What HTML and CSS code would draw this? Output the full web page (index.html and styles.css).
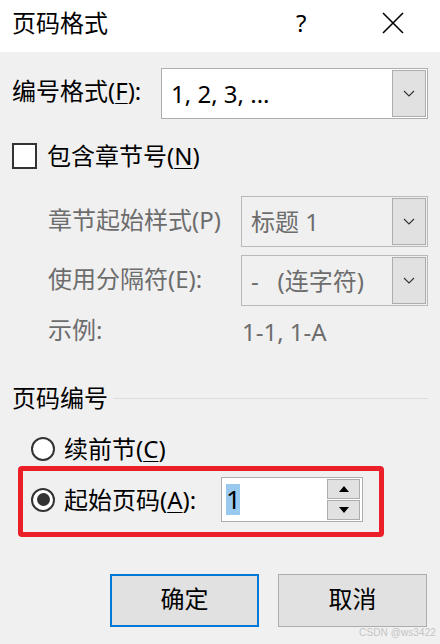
FILE: index.html
```html
<!DOCTYPE html>
<html lang="zh-CN">
<head>
<meta charset="utf-8">
<title>页码格式</title>
<link rel="stylesheet" href="styles.css">
</head>
<body>
<div class="dialog">
  <header class="titlebar">
    <span class="title">页码格式</span>
    <span class="help">?</span>
    <span class="close">
      <svg width="22" height="22" viewBox="0 0 22 22"><path d="M1 1 L21 21 M21 1 L1 21" stroke="#000" stroke-width="1.6" fill="none"/></svg>
    </span>
  </header>

  <main class="body">
    <div class="row row-format">
      <span class="label label-main">编号格式(<u>F</u>):</span>
      <div class="combo combo-wide">
        <span class="combo-text">1, 2, 3, ...</span>
        <span class="combo-btn"><svg width="12" height="7" viewBox="0 0 12 7"><path d="M1 1 L6 6 L11 1" stroke="#333" stroke-width="1.1" fill="none"/></svg></span>
      </div>
    </div>

    <div class="row row-check">
      <span class="checkbox"></span>
      <span class="label">包含章节号(<u>N</u>)</span>
    </div>

    <div class="row row-sub row-sub-first">
      <span class="label label-sub disabled">章节起始样式(P)</span>
      <div class="combo combo-narrow combo-disabled">
        <span class="combo-text">标题 1</span>
        <span class="combo-btn"><svg width="12" height="7" viewBox="0 0 12 7"><path d="M1 1 L6 6 L11 1" stroke="#333" stroke-width="1.1" fill="none"/></svg></span>
      </div>
    </div>

    <div class="row row-sub">
      <span class="label label-sub disabled">使用分隔符(E):</span>
      <div class="combo combo-narrow combo-disabled">
        <span class="combo-text">-&nbsp;&nbsp;&nbsp;(连字符)</span>
        <span class="combo-btn"><svg width="12" height="7" viewBox="0 0 12 7"><path d="M1 1 L6 6 L11 1" stroke="#333" stroke-width="1.1" fill="none"/></svg></span>
      </div>
    </div>

    <div class="row row-example">
      <span class="label label-sub disabled">示例:</span>
      <span class="label disabled example-value">1-1, 1-A</span>
    </div>

    <div class="row section-head">
      <span class="label">页码编号</span>
      <span class="section-line"></span>
    </div>

    <div class="row row-radio">
      <span class="radio"></span>
      <span class="label">续前节(<u>C</u>)</span>
    </div>

    <div class="row row-radio row-start">
      <span class="radio radio-on"></span>
      <span class="label label-start">起始页码(<u>A</u>):</span>
      <div class="spin">
        <span class="spin-text"><span class="sel">1</span></span>
        <span class="spin-btns">
          <span class="spin-btn"><svg width="10" height="6" viewBox="0 0 10 6"><path d="M0 6 L5 0 L10 6 Z" fill="#000"/></svg></span>
          <span class="spin-btn"><svg width="10" height="6" viewBox="0 0 10 6"><path d="M0 0 L10 0 L5 6 Z" fill="#000"/></svg></span>
        </span>
      </div>
      <span class="highlight"></span>
    </div>

    <div class="row row-buttons">
      <button class="btn btn-default">确定</button>
      <button class="btn">取消</button>
    </div>
  </main>
  <span class="watermark">CSDN @ws3422</span>
</div>
</body>
</html>
```

FILE: styles.css
```css
* { box-sizing: border-box; }

html, body {
  margin: 0;
  padding: 0;
}

body {
  width: 440px;
  height: 644px;
  overflow: hidden;
  background: #f0f0f0;
  font-family: "Noto Sans", "Noto Sans CJK SC", sans-serif;
  font-size: 24px;
  color: #000;
}

.dialog {
  position: relative;
  width: 440px;
  height: 644px;
  background: #f0f0f0;
}

u { text-decoration: underline; text-underline-offset: 3px; text-decoration-thickness: 1px; }

.titlebar {
  height: 52px;
  background: #fff;
  display: flex;
  align-items: center;
  padding-left: 12px;
}

.title {
  line-height: 30px;
  margin-top: -6px;
  width: 284px;
}

.help {
  width: 86px;
  line-height: 30px;
  margin-top: -6px;
}

.close {
  display: flex;
  margin-top: -6px;
}

.body {
  display: flex;
  flex-direction: column;
}

.row {
  display: flex;
  align-items: center;
}

.label {
  line-height: 30px;
  white-space: nowrap;
}

.disabled { color: #6d6d6d; }

.row-format {
  margin-top: 16px;
  height: 51px;
  padding-left: 12px;
}

.label-main { width: 149px; margin-top: -6px; }

.combo {
  height: 51px;
  border: 1px solid #adadad;
  background: #fff;
  display: flex;
  align-items: center;
  padding: 0 1px 0 9px;
}

.combo-wide { width: 267px; }
.combo-narrow { width: 187px; }

.combo-disabled {
  background: #f0f0f0;
  border-color: #b9b9b9;
  color: #6d6d6d;
}

.combo-text {
  flex: 1;
  line-height: 30px;
  white-space: nowrap;
}

.combo-btn {
  width: 34px;
  height: 47px;
  background: #e1e1e1;
  border: 1px solid #adadad;
  display: flex;
  align-items: center;
  justify-content: center;
}

.row-check {
  margin-top: 24px;
  height: 26px;
  padding-left: 12px;
}

.checkbox {
  width: 25px;
  height: 26px;
  border: 2px solid #333;
  background: #fff;
  margin-right: 10px;
}

.row-sub {
  margin-top: 8px;
  height: 51px;
  padding-left: 48px;
}

.row-sub-first { margin-top: 27px; }

.label-sub { width: 193px; margin-top: -4px; }

.row-example {
  margin-top: 11px;
  height: 30px;
  padding-left: 48px;
}

.example-value { margin-left: 1px; }

.section-head {
  margin-top: 37px;
  height: 28px;
  padding-left: 12px;
  padding-right: 12px;
}

.section-line {
  flex: 1;
  height: 1px;
  background: #dcdcdc;
  margin-left: 5px;
  margin-top: 0;
}

.row-radio {
  margin-top: 24px;
  height: 26px;
  padding-left: 31px;
}

.radio {
  width: 24px;
  height: 24px;
  border: 2px solid #333;
  border-radius: 50%;
  background: #fff;
  margin-right: 9px;
  display: flex;
  align-items: center;
  justify-content: center;
}

.radio-on::after {
  content: "";
  width: 13px;
  height: 13px;
  border-radius: 50%;
  background: #333;
}

.row-start {
  position: relative;
  margin-top: 15px;
  height: 45px;
}

.label-start { width: 157px; }

.spin {
  width: 142px;
  height: 45px;
  border: 1px solid #adadad;
  background: #fff;
  display: flex;
  align-items: center;
  padding: 0 2px 0 4px;
}

.spin-text {
  flex: 1;
  display: flex;
}

.sel {
  background: #99c9ef;
  width: 14px;
  height: 31px;
  line-height: 31px;
  text-align: center;
  font-size: 26px;
}

.spin-btns {
  display: flex;
  flex-direction: column;
  gap: 1px;
}

.spin-btn {
  width: 33px;
  height: 20px;
  background: #e1e1e1;
  border: 1px solid #adadad;
  display: flex;
  align-items: center;
  justify-content: center;
}

.highlight {
  position: absolute;
  left: 18px;
  top: -11px;
  width: 366px;
  height: 71px;
  border: 5px solid #ea1f28;
  border-radius: 4px;
  pointer-events: none;
}

.row-buttons {
  margin-top: 52px;
  height: 53px;
  padding-left: 110px;
  gap: 19px;
}

.btn {
  width: 149px;
  height: 53px;
  background: #e1e1e1;
  border: 1px solid #adadad;
  font-family: inherit;
  font-size: 24px;
  color: #000;
  line-height: 30px;
  padding: 0 0 4px 0;
}

.btn-default {
  border: 2px solid #0078d7;
}

.watermark {
  position: absolute;
  right: 4px;
  bottom: 6px;
  font-family: "Liberation Sans", sans-serif;
  font-size: 10px;
  color: #c4c4c4;
  letter-spacing: 0.1px;
}
```
